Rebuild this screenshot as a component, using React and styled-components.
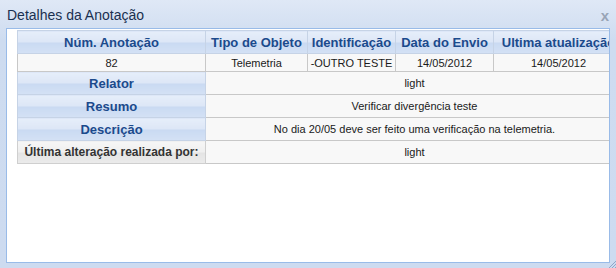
import React from 'react';
import styled, { createGlobalStyle } from 'styled-components';

const GlobalStyle = createGlobalStyle`
  html, body {
    margin: 0;
    padding: 0;
    background: #ffffff;
    overflow: hidden;
  }
`;

const Window = styled.div`
  position: relative;
  width: 616px;
  height: 268px;
  display: flex;
  flex-direction: column;
  background: linear-gradient(#dfe8f6, #cedcf0 40px, #cddbf0);
  font-family: 'Liberation Sans', Arial, sans-serif;
  box-sizing: border-box;
  overflow: hidden;
`;

const TitleBar = styled.div`
  height: 28px;
  display: flex;
  align-items: center;
  justify-content: space-between;
  padding: 0 7px 0 7px;
  box-sizing: border-box;
`;

const Title = styled.span`
  font-size: 14px;
  color: #1a3050;
  padding-top: 2px;
`;

const CloseBtn = styled.span`
  font-size: 15px;
  font-weight: bold;
  color: #98a4b6;
  line-height: 1;
  margin-top: 2px;
`;

const Body = styled.div`
  flex: 1;
  margin: 0 6px 5px 6px;
  border: 1px solid #99bbe8;
  background: #ffffff;
  padding: 0 0 0 10px;
  overflow: hidden;
`;

const Table = styled.table`
  border-collapse: collapse;
  table-layout: fixed;
  width: 606px;
  margin-top: 1px;
`;

const HeadCell = styled.th`
  height: 22px;
  padding: 0;
  border: 1px solid #c6d3e6;
  background: linear-gradient(#e6eefa 0%, #dce6f6 50%, #c9daf2 52%, #d4e1f5 100%);
  color: ${p => (p.$muted ? '#333333' : '#1b4a8c')};
  font-size: ${p => (p.$muted ? '12px' : '13px')};
  font-weight: bold;
  text-align: center;
  white-space: nowrap;
  overflow: hidden;
  ${p => p.$muted && `
    background: linear-gradient(#f6f6f6 0%, #efefef 50%, #e4e4e4 52%, #ebebeb 100%);
    border-color: #cfcfcf;
  `}
`;

const Cell = styled.td`
  height: ${p => (p.$tall ? '22px' : '17px')};
  padding: 0;
  border: 1px solid #c8c8c8;
  background: #f8f8f8;
  color: #1a1a1a;
  font-size: 11px;
  text-align: center;
  white-space: nowrap;
  overflow: hidden;
`;

const Grip = styled.svg`
  position: absolute;
  right: 0;
  bottom: 0;
`;

const columns = [
  { label: 'Núm. Anotação', width: 188 },
  { label: 'Tipo de Objeto', width: 102 },
  { label: 'Identificação', width: 88 },
  { label: 'Data do Envio', width: 98 },
  { label: 'Ultima atualização', width: 130 },
];

const values = ['82', 'Telemetria', '-OUTRO TESTE', '14/05/2012', '14/05/2012'];

const details = [
  { label: 'Relator', value: 'light' },
  { label: 'Resumo', value: 'Verificar divergência teste' },
  { label: 'Descrição', value: 'No dia 20/05 deve ser feito uma verificação na telemetria.' },
  { label: 'Última alteração realizada por:', value: 'light', muted: true },
];

export default function App() {
  return (
    <>
      <GlobalStyle />
      <Window>
        <TitleBar>
          <Title>Detalhes da Anotação</Title>
          <CloseBtn>x</CloseBtn>
        </TitleBar>
        <Body>
          <Table>
            <colgroup>
              {columns.map(c => (
                <col key={c.label} style={{ width: c.width }} />
              ))}
            </colgroup>
            <tbody>
              <tr>
                {columns.map(c => (
                  <HeadCell key={c.label}>{c.label}</HeadCell>
                ))}
              </tr>
              <tr>
                {values.map((v, i) => (
                  <Cell key={i}>{v}</Cell>
                ))}
              </tr>
              {details.map(d => (
                <tr key={d.label}>
                  <HeadCell $muted={d.muted}>{d.label}</HeadCell>
                  <Cell $tall colSpan={4}>{d.value}</Cell>
                </tr>
              ))}
            </tbody>
          </Table>
        </Body>
        <Grip width="8" height="8" viewBox="0 0 8 8">
          <path d="M8 1 L1 8 M8 4 L4 8 M8 7 L7 8" stroke="#8fa6c8" strokeWidth="1" />
        </Grip>
      </Window>
    </>
  );
}
